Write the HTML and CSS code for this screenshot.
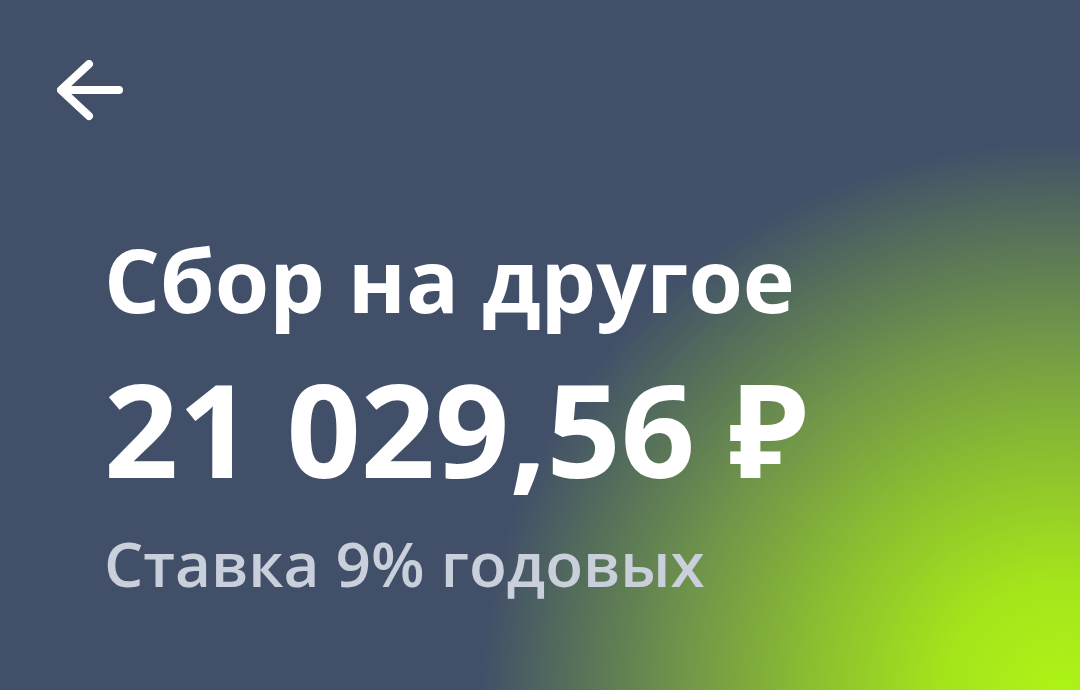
FILE: index.html
```html
<!DOCTYPE html>
<html lang="ru">
<head>
    <meta charset="UTF-8">
    <meta name="viewport" content="width=device-width, initial-scale=1.0">
    <title>Сбор на другое</title>
    <link rel="stylesheet" href="styles.css">
</head>
<body>

    <div class="screen">
        <header class="topbar">
            <button class="back" type="button" aria-label="Назад">
                <svg width="70" height="62" viewBox="0 0 70 62">
                    <path d="M32 4 L4 30 L32 56 M5 30 H62" fill="none" stroke="#fff" stroke-width="8" stroke-linecap="round" stroke-linejoin="round"/>
                </svg>
            </button>
        </header>

        <main class="goal">
            <h1 class="goal-title">Сбор на другое</h1>
            <div class="goal-amount">21 029,56 ₽</div>
            <div class="goal-rate">Ставка 9% годовых</div>
        </main>
    </div>

</body>
</html>
```

FILE: styles.css
```css
html, body {
    margin: 0;
    height: 100%;
}

body {
    font-family: "Open Sans", "Noto Sans", sans-serif;
    color: #fff;
    background-color: #414f69;
    background-image: radial-gradient(ellipse 580px 550px at 1060px 690px,
        #adf416 0%,
        #a4e41b 20%,
        #8dc02f 42%,
        #6f944a 66%,
        #56705a 84%,
        rgba(65, 79, 105, 0) 100%);
    background-repeat: no-repeat;
    overflow: hidden;
}

.screen {
    height: 100%;
    display: flex;
    flex-direction: column;
}

.topbar {
    padding: 60px 0 0 57px;
}

.back {
    background: none;
    border: none;
    padding: 0;
    cursor: pointer;
    display: block;
}

.back svg {
    display: block;
}

.goal {
    padding: 97px 0 0 104px;
}

.goal-title {
    margin: 0;
    font-size: 88px;
    font-weight: 700;
    line-height: 120px;
}

.goal-amount {
    font-size: 130px;
    font-weight: 700;
    line-height: 177px;
}

.goal-rate {
    margin-top: 5px;
    font-size: 62px;
    font-weight: 600;
    line-height: 84px;
    color: #c9cfdb;
}
```
